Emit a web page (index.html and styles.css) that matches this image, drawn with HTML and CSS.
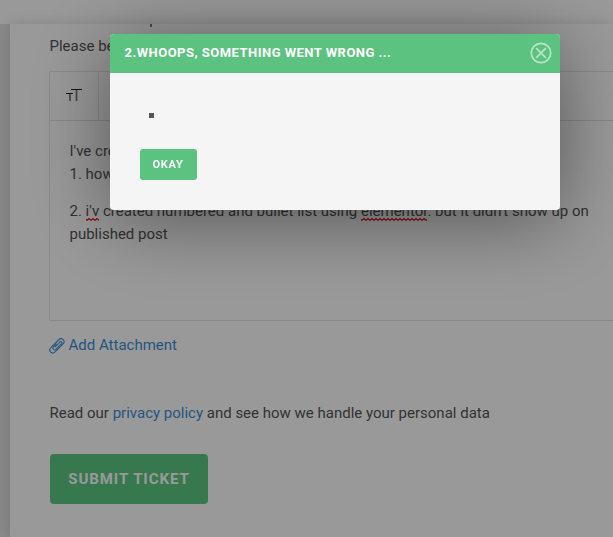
FILE: index.html
```html
<!DOCTYPE html>
<html lang="en">
<head>
<meta charset="utf-8">
<title>Submit ticket</title>
<link rel="stylesheet" href="styles.css">
</head>
<body>
<div class="page">
  <header class="topbar"></header>
  <main class="card">
    <div class="heading-tail"></div>
    <p class="hint">Please be</p>
    <section class="editor">
      <div class="toolbar">
        <button class="tool" aria-label="Text size">
          <svg width="17" height="13" viewBox="0 0 17 13"><path class="tt-stems" d="M10.500 1v11M4 5v7"/><path class="tt-bars" d="M5 .5h11M0 4.500h7"/></svg>
        </button>
      </div>
      <div class="content">
        <p>I've created<br>1. how</p>
        <p>2. <span class="misspelt">i'v</span> created numbered and bullet list using <span class="misspelt">elementor</span>. but it didn't show up on published post</p>
      </div>
    </section>
    <a class="attach">
      <svg width="16" height="16" viewBox="0 0 16 16"><path d="M9.700 5.200 11 4c1.300-.9 2.600.5 1.700 1.700L7 11.400c-1.800 1.600-4.200-.7-2.600-2.500l3.300-3.300"/><path d="M8.900 2.500 10 1.500c2.900-2.300 6.600 1.200 4.300 4.200l-8.500 8.500C2.900 16.600-.9 13 1.500 10L8.900 2.500"/><path d="M9.800 5.300 5.900 9.200"/></svg>
      <span>Add Attachment</span>
    </a>
    <p class="privacy">Read our <a>privacy policy</a> and see how we handle your personal data</p>
    <button class="submit">SUBMIT TICKET</button>
  </main>
</div>
<div class="overlay">
  <div class="modal" role="dialog">
    <div class="modal-head">
      <h2>2.WHOOPS, SOMETHING WENT WRONG ...</h2>
      <svg width="22" height="22" viewBox="0 0 22 22"><circle cx="11" cy="11" r="9.700"/><path d="m6.200 6.200 9.600 9.600m0-9.600-9.600 9.600"/></svg>
    </div>
    <div class="modal-body">
      <div class="bullet"></div>
      <button class="okay">OKAY</button>
    </div>
  </div>
</div>
</body>
</html>
```
FILE: styles.css
```css
* { box-sizing: border-box; }
body {
  margin: 0;
  height: 537px;
  overflow: hidden;
  font: 15px/23px Roboto, sans-serif;
  color: #555;
}
p, h2 { margin: 0; }
button { font-family: inherit; border: 0; padding: 0; }
a { color: #3a8fd6; }
.page { height: 537px; background: #e4e4e4; overflow: hidden; }
.topbar { height: 24px; background: #fff; }
.card {
  margin-left: 10px;
  height: 513px;
  padding-left: 39px;
  background: #fff;
  box-shadow: 0 0 14px rgba(0, 0, 0, .13);
}
.heading-tail {
  width: 2px;
  height: 3px;
  margin-left: 101px;
  background: #4a9a80;
}
.hint { padding: 8px 0 0 .5px; height: 44px; }
.editor {
  width: 600px;
  height: 250px;
  border: 1px solid #e5e5e5;
}
.toolbar { height: 49px; border-bottom: 1px solid #e0e0e0; }
.tool {
  display: flex;
  width: 49px;
  height: 48px;
  padding: 0 0 2px 16px;
  align-items: center;
  background: none;
  border-right: 1px solid #e5e5e5;
}
.tool path { fill: none; stroke: #222; }
.tool .tt-stems { stroke: #777; stroke-width: 1.7; }
.content { padding: 19px 0 0 19.5px; width: 555px; }
.content p + p { margin-top: 14px; }
.misspelt {
  padding-bottom: 1px;
  background: url("data:image/svg+xml,%3Csvg xmlns='http://www.w3.org/2000/svg' width='4' height='3'%3E%3Cpath d='M-1 .5 1 2.300 3 .5 5 2.300' fill='none' stroke='%23e80012' stroke-width='1.100'/%3E%3C/svg%3E") repeat-x left bottom;
}
.attach { display: flex; align-items: center; gap: 3.5px; margin-top: 13px; }
.attach path { fill: none; stroke: #3a8fd6; stroke-width: 1.1; }
.privacy { margin-top: 45px; padding-left: .5px; }
.submit {
  display: block;
  width: 158px;
  height: 50px;
  margin: 29px 0 0 1px;
  border-radius: 4px;
  background: #5dc882;
  color: #fff;
  font-size: 15px;
  font-weight: 700;
  letter-spacing: .95px;
}
.overlay {
  position: fixed;
  inset: 0;
  background: rgba(0, 0, 0, .4);
  padding: 34px 0 0 110px;
}
.modal {
  width: 450px;
  height: 176px;
  border-radius: 4px;
  overflow: hidden;
  background: #f5f5f5;
  box-shadow: 0 10px 80px rgba(0, 0, 0, .45);
}
.modal-head {
  display: flex;
  align-items: center;
  justify-content: space-between;
  height: 39px;
  padding: 0 8px 2px 14.5px;
  background: #5cc280;
  color: #fff;
}
.modal-head h2 { font-size: 13px; font-weight: 700; letter-spacing: .48px; }
.modal-head svg { fill: none; stroke: #b8e5c8; stroke-width: 1.7; }
.modal-body { padding: 40px 30px; }
.bullet { width: 5px; height: 5px; margin-left: 9px; background: #555; }
.okay {
  display: block;
  width: 57px;
  height: 31px;
  margin-top: 31px;
  padding-right: 1px;
  border-radius: 3px;
  background: #5cc280;
  color: #fff;
  font-size: 11px;
  font-weight: 700;
  letter-spacing: .7px;
}
```
